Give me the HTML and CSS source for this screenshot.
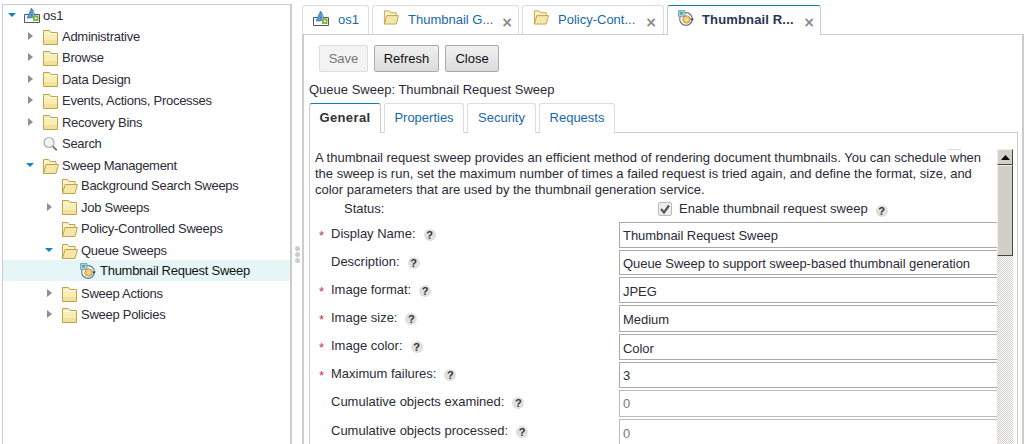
FILE: index.html
```html
<!DOCTYPE html>
<html lang="en">
<head>
<meta charset="utf-8">
<title>Thumbnail Request Sweep</title>
<link rel="stylesheet" href="styles.css">
</head>
<body>
<svg class="defs" width="0" height="0" aria-hidden="true">
  <symbol id="folder" viewBox="0 0 15 16">
    <path d="M.5 15.500V1.500h6l1.500 2h6.500v12z" fill="#f8eeb4" stroke="#bfa24e"/>
    <path d="M1 4h13v1H1z" fill="#fffbe4"/>
    <path d="M1 11h13v4H1z" fill="#f3e19a"/>
  </symbol>
  <symbol id="folder-open" viewBox="0 0 17 16">
    <path d="M1.500 15.500V1.500h5l1.500 2h6v3" fill="#fbf3c8" stroke="#bfa24e"/>
    <path d="M1.500 15.500l2.500-9h12.500l-2.500 9z" fill="#f6e7a6" stroke="#bfa24e"/>
  </symbol>
  <symbol id="os" viewBox="0 0 17 15">
    <path d="M.5 6.500h15v8H.5z" fill="#fff" stroke="#555"/>
    <path d="M7.500 0L3 10h4.500z" fill="#5d9ad0" stroke="#2d6da3" stroke-width=".6"/>
    <path d="M8.500 1l3.500 9H8.500z" fill="#8fbfe3" stroke="#2d6da3" stroke-width=".6"/>
    <path d="M9 7.500h5.500v5.500H9z" fill="#7cb342"/>
    <path d="M10.800 9.300h2v2h-2z" fill="#e8f5c8"/>
  </symbol>
  <symbol id="sweep" viewBox="0 0 16 16">
    <circle cx="8" cy="9" r="6.300" fill="#fff" stroke="#66788e" stroke-width="1.200"/>
    <circle cx="8.500" cy="9.500" r="3.800" fill="#edc36a" stroke="#b98c30" stroke-width=".8"/>
    <circle cx="8.500" cy="9.500" r="1.700" fill="#f7dc9c"/>
    <path d="M.5.500h6.500v6H.5z" fill="#a8cfd0" stroke="#7a9aa0" stroke-width=".8"/>
    <path d="M2 2h3v2.500H2z" fill="#35b2b6"/>
    <path d="M12 8.500h4l-2 2.600z" fill="#2f4d6d"/>
  </symbol>
  <symbol id="search" viewBox="0 0 15 15">
    <circle cx="6" cy="6" r="5" fill="#f2f4f4" stroke="#a9adad" stroke-width="1.200"/>
    <path d="M3 5a3.500 3.500 0 0 1 3-2.500" fill="none" stroke="#fff"/>
    <path d="M9.800 9.800l4 4" stroke="#8a6a55" stroke-width="1.800"/>
  </symbol>
</svg>

<div class="app">
  <nav class="tree">
    <div class="node node-root"><span class="tw tw-open"></span><svg class="ic ic-os"><use href="#os"/></svg><span>os1</span></div>
    <div class="node l1"><span class="tw tw-closed"></span><svg class="ic ic-f"><use href="#folder"/></svg>Administrative</div>
    <div class="node l1"><span class="tw tw-closed"></span><svg class="ic ic-f"><use href="#folder"/></svg>Browse</div>
    <div class="node r22 l1"><span class="tw tw-closed"></span><svg class="ic ic-f"><use href="#folder"/></svg>Data Design</div>
    <div class="node l1"><span class="tw tw-closed"></span><svg class="ic ic-f"><use href="#folder"/></svg>Events, Actions, Processes</div>
    <div class="node r22 l1"><span class="tw tw-closed"></span><svg class="ic ic-f"><use href="#folder"/></svg>Recovery Bins</div>
    <div class="node l1"><span class="tw"></span><svg class="ic ic-f"><use href="#search"/></svg>Search</div>
    <div class="node nudge l1"><span class="tw tw-open"></span><svg class="ic ic-fo"><use href="#folder-open"/></svg>Sweep Management</div>
    <div class="node l2"><span class="tw"></span><svg class="ic ic-fo"><use href="#folder-open"/></svg>Background Search Sweeps</div>
    <div class="node r22 l2"><span class="tw tw-closed"></span><svg class="ic ic-f"><use href="#folder"/></svg>Job Sweeps</div>
    <div class="node l2"><span class="tw"></span><svg class="ic ic-fo"><use href="#folder-open"/></svg>Policy-Controlled Sweeps</div>
    <div class="node nudge l2"><span class="tw tw-open"></span><svg class="ic ic-fo"><use href="#folder-open"/></svg>Queue Sweeps</div>
    <div class="node l3 selected"><span class="tw"></span><svg class="ic ic-s"><use href="#sweep"/></svg>Thumbnail Request Sweep</div>
    <div class="node r23 nudge l2"><span class="tw tw-closed"></span><svg class="ic ic-f"><use href="#folder"/></svg>Sweep Actions</div>
    <div class="node l2"><span class="tw tw-closed"></span><svg class="ic ic-f"><use href="#folder"/></svg>Sweep Policies</div>
  </nav>

  <div class="splitter"><i></i><i></i><i></i></div>

  <main class="workspace">
    <div class="tabstrip">
      <div class="tab tab-os"><svg class="ic ic-os"><use href="#os"/></svg><span class="tab-text">os1</span></div>
      <div class="tab tab-a"><svg class="ic ic-tf"><use href="#folder-open"/></svg><span class="tab-text">Thumbnail G...</span><span class="close">×</span></div>
      <div class="tab tab-b"><svg class="ic ic-tf"><use href="#folder-open"/></svg><span class="tab-text">Policy-Cont...</span><span class="close">×</span></div>
      <div class="tab tab-c active"><svg class="ic ic-s"><use href="#sweep"/></svg><span class="tab-text">Thumbnail R...</span><span class="close">×</span></div>
    </div>
    <div class="panel">
      <div class="toolbar">
        <button class="btn btn-save" disabled>Save</button>
        <button class="btn btn-refresh">Refresh</button>
        <button class="btn btn-close">Close</button>
      </div>
      <div class="page-title">Queue Sweep: Thumbnail Request Sweep</div>
      <div class="subtabs">
        <div class="subtab st-general active">General</div>
        <div class="subtab st-props">Properties</div>
        <div class="subtab st-sec">Security</div>
        <div class="subtab st-req">Requests</div>
      </div>
      <div class="subpanel">
        <div class="scroll-content">
          <p class="intro">A thumbnail request sweep provides an efficient method of rendering document thumbnails. You can schedule when the sweep is run, set the maximum number of times a failed request is tried again, and define the format, size, and color parameters that are used by the thumbnail generation service.</p>
          <div class="form">
            <div class="lab lab-status">Status:</div>
            <div class="status-val"><span class="check"><svg width="14" height="14" viewBox="0 0 14 14"><path d="M3 7l3 3.500 5-7" fill="none" stroke="#555" stroke-width="2.200"/></svg></span><span class="check-label">Enable thumbnail request sweep</span><span class="help">?</span></div>

            <div class="lab"><span class="req">*</span>Display Name:<span class="help">?</span></div>
            <div class="field">Thumbnail Request Sweep</div>
            <div class="lab"><span class="req none">*</span>Description:<span class="help">?</span></div>
            <div class="field low">Queue Sweep to support sweep-based thumbnail generation</div>
            <div class="lab low"><span class="req">*</span>Image format:<span class="help">?</span></div>
            <div class="field low">JPEG</div>
            <div class="lab low"><span class="req">*</span>Image size:<span class="help">?</span></div>
            <div class="field low">Medium</div>
            <div class="lab"><span class="req">*</span>Image color:<span class="help">?</span></div>
            <div class="field low">Color</div>
            <div class="lab"><span class="req">*</span>Maximum failures:<span class="help">?</span></div>
            <div class="field">3</div>
            <div class="lab"><span class="req none">*</span>Cumulative objects examined:<span class="help">?</span></div>
            <div class="field ro">0</div>
            <div class="lab"><span class="req none">*</span>Cumulative objects processed:<span class="help">?</span></div>
            <div class="field ro">0</div>
          </div>
        </div>
        <div class="scrollbar">
          <div class="sb-btn"><svg width="9" height="5" viewBox="0 0 9 5"><path d="M4.500 0L9 5H0z" fill="#000"/></svg></div>
          <div class="sb-thumb"></div>
          <div class="sb-track"></div>
        </div>
        <div class="artifact"></div>
      </div>
    </div>
  </main>
</div>
</body>
</html>
```

FILE: styles.css
```css
* { box-sizing: border-box; }
html, body { margin: 0; padding: 0; height: 444px; overflow: hidden; background: #fff; }
body { font-family: "Liberation Sans", Arial, sans-serif; font-size: 13px; color: #2b2b38; }
.defs { position: absolute; }
.app { display: flex; height: 444px; padding: 4px 3px 0 2px; overflow: hidden; }

.tree { width: 290px; flex: none; border: 1px solid #ccc; border-width: 1px 2px 0 1px; letter-spacing: -.27px; }
.node { display: flex; align-items: center; white-space: nowrap; height: 21px; }
.node-root { padding-left: 5px; }
.r22 { height: 22px; }
.r23 { height: 23px; }
.nudge { padding-top: 2px; }
.l1 { padding-left: 23px; }
.l2 { padding-left: 42px; }
.l3 { padding-left: 61px; }
.selected { background: #e6f5f6; color: #111; }
.tw { width: 9px; height: 9px; flex: none; margin-right: 7px; position: relative; }
.tw-closed::after { content: ""; position: absolute; left: 2px; top: 0; border: 4px solid transparent; border-left: 5px solid #8a9090; border-right: 0; }
.tw-open::after { content: ""; position: absolute; left: 0; top: 2px; border: 4px solid transparent; border-top: 4px solid #0f86c0; border-bottom: 0; }
.ic { flex: none; display: block; }
.ic-f { width: 15px; height: 16px; margin-right: 4px; margin-left: 1px; }
.ic-fo { width: 17px; height: 16px; margin-right: 3px; }
.ic-os { width: 17px; height: 15px; margin-right: 2px; }
.ic-s { width: 16px; height: 16px; margin-right: 4px; }
.ic-tf { width: 16px; height: 16px; margin-right: 9px; }

.splitter { width: 10px; flex: none; display: flex; flex-direction: column; align-items: center; gap: 1px; padding-top: 242px; }
.splitter i { width: 5px; height: 5px; border-radius: 50%; background: #ccc; display: block; flex: none; }

.workspace { flex: 1; min-width: 0; display: flex; flex-direction: column; }
.tabstrip { display: flex; gap: 3px; height: 30px; margin-top: 1px; position: relative; z-index: 1; flex: none; }
.tab { height: 30px; border: 1px solid #ddd; border-bottom: 0; border-radius: 3px 3px 0 0; display: flex; align-items: center; padding: 0 0 2px 10px; color: #1a68a8; position: relative; background: #fff; }
.tab .ic { margin-bottom: 4px; }
.tab .ic-os { margin-right: 8px; margin-bottom: 2px; }
.tab .ic-s { margin-right: 8px; }
.tab-os { width: 67px; height: 29px; }
.tab-a { width: 147px; height: 29px; }
.tab-b { width: 142px; height: 29px; }
.tab-c { width: 154px; }
.tab.active { border: 1px solid #ccc; border-top: 1px solid #0f7fb8; border-bottom: 0; color: #2a3550; font-weight: bold; letter-spacing: .15px; }
.tab-text { white-space: nowrap; }
.close { position: absolute; right: 5px; top: 9px; color: #8a8a8a; font: bold 14px/14px "DejaVu Sans", sans-serif; letter-spacing: 0; }
.tab-b .close { right: 6px; }

.panel { flex: 1; min-height: 0; margin-top: -1px; border: 1px solid #ccc; border-width: 1px 2px 0 2px; padding: 10px 4px 0 5px; display: flex; flex-direction: column; }
.toolbar { display: flex; gap: 6px; padding-left: 10px; height: 27px; flex: none; }
.btn { height: 27px; font: inherit; color: #111; border: 1px solid #aaa; border-radius: 2px; background: linear-gradient(#f0f0f0, #dcdcdf); padding: 0; }
.btn-save { width: 49px; color: #777; background: #f3f3f3; border-color: #ddd; }
.btn-refresh { width: 65px; }
.btn-close { width: 54px; }
.page-title { height: 22px; margin-top: 7px; line-height: 22px; flex: none; }
.subtabs { display: flex; gap: 3px; height: 30px; flex: none; position: relative; z-index: 1; margin-top: 2px; }
.subtab { height: 30px; border: 1px solid #ddd; border-bottom: 0; border-radius: 3px 3px 0 0; color: #1a68a8; display: flex; align-items: center; justify-content: center; padding-bottom: 2px; background: #fff; }
.subtab.active { border: 1px solid #ccc; border-top: 1px solid #0f7fb8; border-bottom: 0; font-weight: bold; color: #333; letter-spacing: .4px; }
.st-general { width: 72px; }
.st-props { width: 80px; }
.st-sec { width: 69px; }
.st-req { width: 76px; }
.subpanel { flex: 1; min-height: 0; margin-top: -1px; border: 1px solid #ccc; border-bottom: 0; display: flex; position: relative; overflow: hidden; }
.scroll-content { width: 687px; flex: none; overflow: hidden; padding: 17px 0 0 5px; }
.intro { margin: 0; line-height: 16px; width: 682px; }

.form { display: grid; grid-template-columns: 304px 380px; grid-template-rows: 24px 28px 27px 28px 29px 28px 28px 29px 24px; }
.lab { display: flex; align-items: flex-start; padding-top: 4px; line-height: 16px; white-space: nowrap; }
.lab.low { padding-top: 5px; }
.lab-status { padding-left: 29px; padding-top: 3px; }
.req { width: 16px; flex: none; padding-left: 4px; margin-top: 2px; color: #d03040; }
.req.none { visibility: hidden; }
.help { width: 12px; height: 12px; flex: none; border-radius: 50%; background: #e0e0e0; color: #333; font: bold 11px/12px "Liberation Sans", sans-serif; text-align: center; margin: 3px 0 0 8px; }
.status-val { display: flex; align-items: flex-start; padding: 4px 0 0 39px; }
.check { width: 14px; height: 14px; margin-top: 0; border: 1px solid #bbb; border-radius: 2px; background: #eee; display: block; flex: none; overflow: hidden; }
.check svg { display: block; margin: -1px 0 0 -1px; }
.check-label { margin-left: 7px; line-height: 14px; }
.status-val .help { margin-top: 3px; }
.field { border: 1px solid #aaa; margin-bottom: 2px; display: flex; align-items: center; padding-left: 3px; background: #fff; letter-spacing: -.05px; }
.field.low { padding-top: 2px; }
.field:last-child { margin-bottom: -4px; }
.field.ro { border-color: #bbb; color: #777; }

.scrollbar { width: 16px; flex: none; margin-top: 16px; display: flex; flex-direction: column; }
.sb-btn { height: 16px; flex: none; background: #d4d0c8; border: 1px solid; border-color: #eee #444 #444 #eee; display: flex; align-items: center; justify-content: center; }
.sb-thumb { height: 91px; flex: none; background: #d0d0c8; border: 1px solid; border-color: #eee #444 #444 #eee; }
.sb-track { flex: 1; background: repeating-conic-gradient(#d4d0c8 0 25%, #fff 0 50%) 0 0 / 2px 2px; }
.artifact { position: absolute; left: 637px; top: 16px; width: 14px; height: 5px; border-top: 1px solid #ddd; border-left: 1px solid #eee; border-right: 1px solid #eee; }
```
